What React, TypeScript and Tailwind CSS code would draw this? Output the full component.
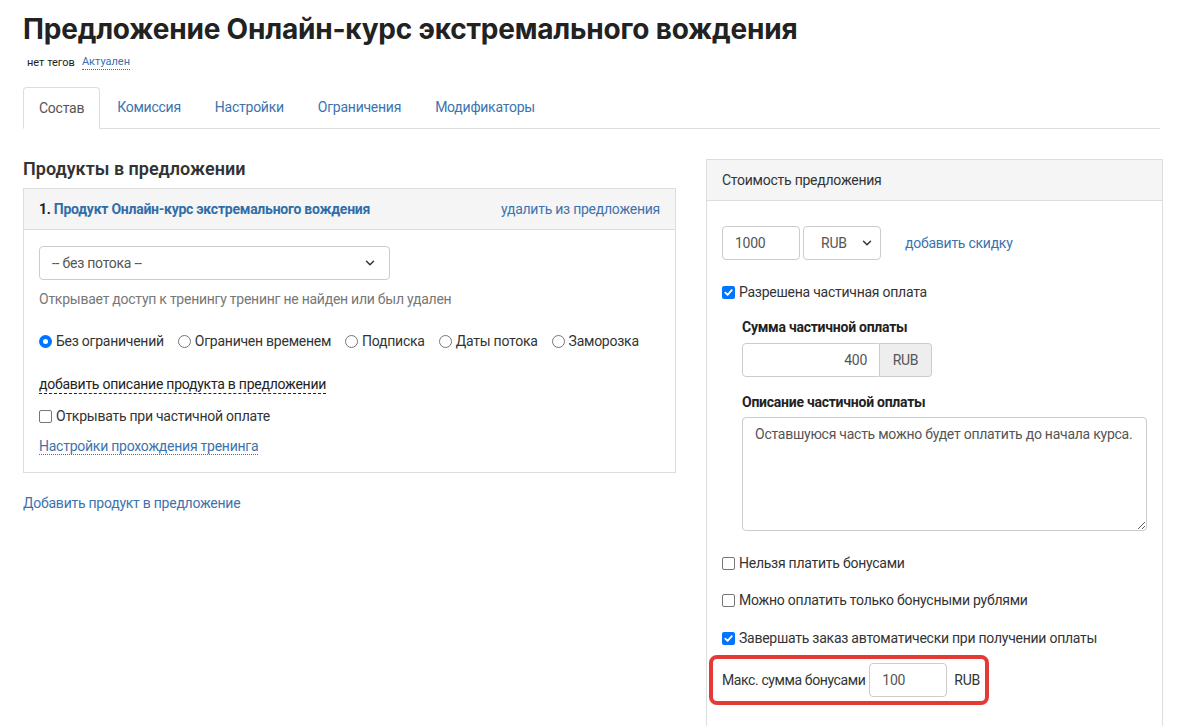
import { ChevronDown } from "lucide-react";

function Check({ checked }: { checked?: boolean }) {
  return checked ? (
    <span className="inline-flex h-[13px] w-[13px] shrink-0 items-center justify-center rounded-[2px] bg-[#0075ff]">
      <svg viewBox="0 0 12 12" className="h-[11px] w-[11px]">
        <path d="M2.5 6.2 L5 8.6 L9.6 3.4" fill="none" stroke="#fff" strokeWidth="2" strokeLinecap="round" strokeLinejoin="round" />
      </svg>
    </span>
  ) : (
    <span className="inline-block h-[13px] w-[13px] shrink-0 rounded-[2px] border border-[#767676] bg-white" />
  );
}

function Radio({ checked }: { checked?: boolean }) {
  return checked ? (
    <span className="inline-flex h-[13px] w-[13px] shrink-0 items-center justify-center rounded-full bg-[#0075ff]">
      <span className="h-[5px] w-[5px] rounded-full bg-white" />
    </span>
  ) : (
    <span className="inline-block h-[13px] w-[13px] shrink-0 rounded-full border border-[#767676] bg-white" />
  );
}

const tabs = ["Состав", "Комиссия", "Настройки", "Ограничения", "Модификаторы"];
const radios = ["Без ограничений", "Ограничен временем", "Подписка", "Даты потока", "Заморозка"];

export default function App() {
  return (
    <div className="min-h-[726px] bg-white px-[23px] pt-[12px] text-[14px] tracking-[-0.25px] text-[#333] font-['Roboto',sans-serif]">
      <h1 className="text-[28px] font-bold leading-[34px] tracking-[-0.2px] text-[#222] font-['Inter',sans-serif]">
        Предложение Онлайн-курс экстремального вождения
      </h1>
      <div className="mt-[9px] flex items-center gap-[7px] pl-[4px] text-[11px] leading-[14px] tracking-normal">
        <span className="text-[#222]">нет тегов</span>
        <span className="border-b border-dotted border-[#2a6fb5] text-[#3a6fb0]">Актуален</span>
      </div>

      {/* Tabs */}
      <div className="mt-[17px] flex border-b border-[#ddd]">
        {tabs.map((t, i) => (
          <div
            key={t}
            className={
              i === 0
                ? "-mb-px h-[42px] rounded-t-[4px] border border-b-white border-[#ddd] bg-white px-[15px] leading-[40px] text-[#555]"
                : "h-[41px] px-[17px] leading-[40px] text-[#3d73ad]"
            }
          >
            {t}
          </div>
        ))}
      </div>

      <div className="mt-[30px] flex items-start gap-[30px]">
        {/* Left column */}
        <div className="w-[653px] shrink-0">
          <h2 className="text-[18px] font-semibold leading-[20px] tracking-normal text-[#333]">Продукты в предложении</h2>
          <div className="mt-[9px] border border-[#ddd]">
            <div className="flex h-[41px] items-center justify-between border-b border-[#ddd] bg-[#f5f5f5] px-[15px]">
              <div className="font-bold">
                <span className="text-[#222]">1. </span>
                <span className="text-[#2f6ea8]">Продукт Онлайн-курс экстремального вождения</span>
              </div>
              <span className="text-[#3d73ad]">удалить из предложения</span>
            </div>
            <div className="px-[15px] pt-[16px] pb-[15px]">
              <div className="flex h-[34px] w-[351px] items-center justify-between rounded-[4px] border border-[#ccc] px-[12px] text-[#555]">
                <span>-- без потока --</span>
                <ChevronDown className="h-[14px] w-[14px] text-[#333]" strokeWidth={2.5} />
              </div>
              <p className="mt-[9px] leading-[20px] text-[#777]">Открывает доступ к тренингу тренинг не найден или был удален</p>
              <div className="mt-[22px] flex items-center gap-[14px] leading-[20px]">
                {radios.map((r, i) => (
                  <label key={r} className="flex items-center gap-[4px]">
                    <Radio checked={i === 0} />
                    <span>{r}</span>
                  </label>
                ))}
              </div>
              <div className="mt-[23px]">
                <span className="border-b border-dashed border-[#222] pb-[1px] leading-[20px] text-[#222]">
                  добавить описание продукта в предложении
                </span>
              </div>
              <label className="mt-[11px] flex items-center gap-[4px] leading-[20px]">
                <Check />
                <span>Открывать при частичной оплате</span>
              </label>
              <div className="mt-[10px]">
                <span className="border-b border-dotted border-[#3d73ad] leading-[20px] text-[#3d73ad]">
                  Настройки прохождения тренинга
                </span>
              </div>
            </div>
          </div>
          <div className="mt-[20px] leading-[20px] text-[#3d73ad]">Добавить продукт в предложение</div>
        </div>

        {/* Right column */}
        <div className="flex-1 border border-[#ddd] min-h-[580px]">
          <div className="flex h-[41px] items-center border-b border-[#ddd] bg-[#f5f5f5] px-[15px] text-[#333]">
            Стоимость предложения
          </div>
          <div className="px-[15px] pt-[25px]">
            <div className="flex items-center">
              <div className="flex h-[34px] w-[78px] items-center rounded-[4px] border border-[#ccc] px-[12px] text-[#555]">1000</div>
              <div className="ml-[3px] flex h-[34px] w-[78px] items-center justify-between rounded-[4px] border border-[#ccc] pl-[17px] pr-[6px] text-[#555]">
                <span>RUB</span>
                <ChevronDown className="h-[14px] w-[14px] text-[#333]" strokeWidth={2.5} />
              </div>
              <span className="ml-[24px] text-[#3d73ad]">добавить скидку</span>
            </div>
            <label className="mt-[22px] flex items-center gap-[4px] leading-[20px]">
              <Check checked />
              <span>Разрешена частичная оплата</span>
            </label>
            <div className="pl-[20px]">
              <div className="mt-[16px] font-bold leading-[18px] text-[#222]">Сумма частичной оплаты</div>
              <div className="mt-[7px] flex h-[34px] w-[190px]">
                <div className="flex flex-1 items-center justify-end rounded-l-[4px] border border-[#ccc] px-[12px] text-[#555]">400</div>
                <div className="flex w-[52px] items-center justify-center rounded-r-[4px] border border-l-0 border-[#ccc] bg-[#eee] text-[#555]">RUB</div>
              </div>
              <div className="mt-[16px] font-bold leading-[18px] text-[#222]">Описание частичной оплаты</div>
              <textarea
                readOnly
                defaultValue="Оставшуюся часть можно будет оплатить до начала курса."
                className="mt-[6px] block h-[114px] w-[405px] rounded-[4px] border border-[#ccc] px-[12px] py-[6px] text-[14px] leading-[20px] tracking-[-0.25px] text-[#555] outline-none"
              />
            </div>
            <label className="mt-[22px] flex items-center gap-[4px] leading-[20px]">
              <Check />
              <span>Нельзя платить бонусами</span>
            </label>
            <label className="mt-[17px] flex items-center gap-[4px] leading-[20px]">
              <Check />
              <span>Можно оплатить только бонусными рублями</span>
            </label>
            <label className="mt-[18px] flex items-center gap-[4px] leading-[20px]">
              <Check checked />
              <span>Завершать заказ автоматически при получении оплаты</span>
            </label>
            <div className="ml-[-13px] mt-[7px] flex h-[50px] w-[280px] items-center whitespace-nowrap rounded-[8px] border-[4px] border-[#e53935] pl-[9px]">
              <span className="tracking-[-0.4px]">Макс. сумма бонусами</span>
              <div className="ml-[4px] flex h-[34px] w-[78px] shrink-0 items-center rounded-[4px] border border-[#ccc] px-[12px] text-[#555]">100</div>
              <span className="ml-[7px]">RUB</span>
            </div>
          </div>
        </div>
      </div>
    </div>
  );
}
